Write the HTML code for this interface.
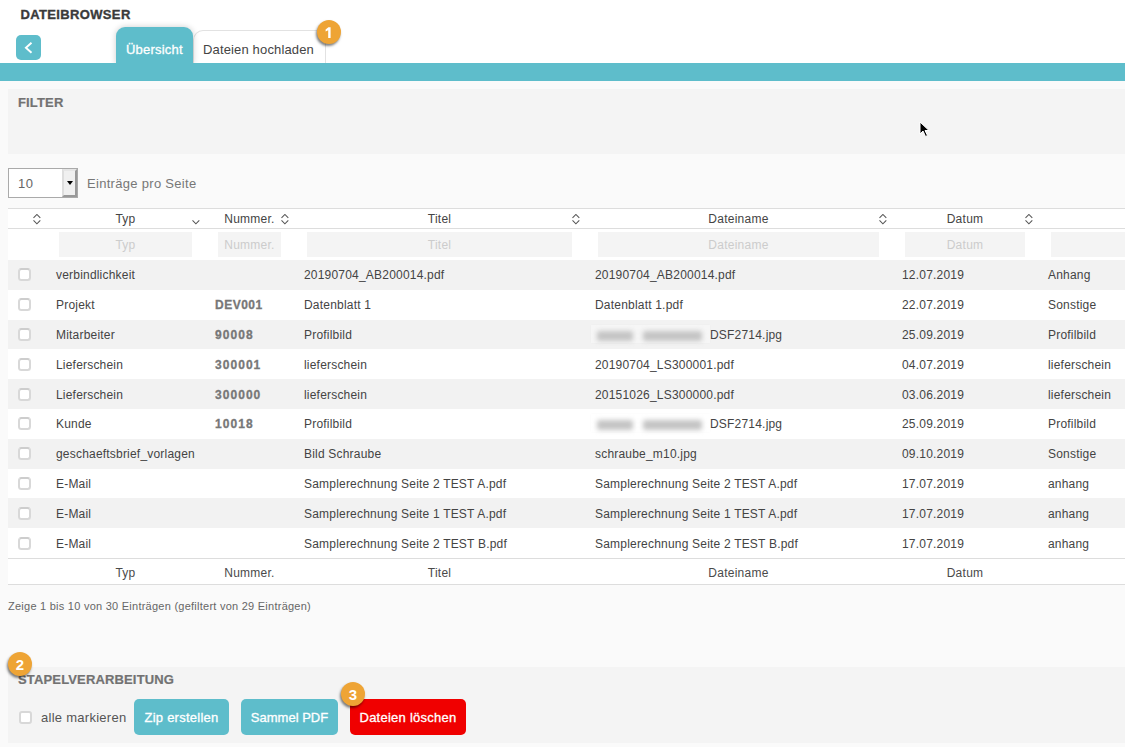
<!DOCTYPE html>
<html><head><meta charset="utf-8">
<style>
*{box-sizing:border-box;margin:0;padding:0}
html,body{width:1125px;height:747px;overflow:hidden}
body{background:#fafafa;font-family:"Liberation Sans",sans-serif;color:#444;position:relative}
.a{position:absolute;white-space:nowrap}
#top{position:absolute;left:0;top:0;width:1125px;height:63px;background:#fff}
#band{position:absolute;left:0;top:63px;width:1125px;height:18px;background:#5ebdcb}
#title{left:20.5px;top:7px;font-size:13px;font-weight:bold;color:#3a3a3a;letter-spacing:0.35px;-webkit-text-stroke:0.35px #3a3a3a}
#back{left:16px;top:35px;width:25px;height:25px;border-radius:5px;background:#5ebdcb}
#tab1{left:116px;top:27px;width:77px;height:37px;background:#5ebdcb;border-radius:9px 9px 0 0;box-shadow:0 0 6px rgba(0,0,0,.2)}
#tab1 span{position:absolute;left:10px;top:15px;color:#fff;font-size:13px;letter-spacing:0.2px;-webkit-text-stroke:0.3px #fff}
#tab2{left:193px;top:30px;width:133px;height:34px;background:#fff;border:1px solid #e2e2e2;border-bottom:none;border-radius:10px 10px 0 0}
#tab2 span{position:absolute;left:9px;top:11px;color:#444;font-size:13px;letter-spacing:0.15px}
.badge{position:absolute;width:24px;height:24px;border-radius:50%;background:#eea435;color:#fff;font-weight:bold;font-size:15px;text-align:center;line-height:25px;box-shadow:-1px 2px 2.5px rgba(0,0,0,.5)}
#filter{left:8px;top:89px;width:1117px;height:65px;background:#f4f4f4}
#filter b,#stapel b{position:absolute;left:10px;top:6px;font-size:13px;color:#727272;letter-spacing:.15px;-webkit-text-stroke:0.2px #727272}
#sel{left:8px;top:168px;width:70px;height:30px;background:#fff;border:1px solid #aaa}
#sel span{position:absolute;left:9px;top:7px;font-size:13px;color:#666;letter-spacing:.6px}
#selbtn{position:absolute;left:53px;top:0;width:15px;height:28px;background:#f0f0f0;border-left:2px solid #dedede;border-top:2px solid #e6e6e6;border-right:2px solid #999;border-bottom:2px solid #999}
#selbtn:after{content:"";position:absolute;left:2.5px;top:10px;border-left:3px solid transparent;border-right:3px solid transparent;border-top:4px solid #000}
#epp{left:87px;top:176px;font-size:13px;color:#777;letter-spacing:0.3px}
#thead{left:8px;top:208px;width:1117px;height:21px;background:#fff;border-top:1px solid #ddd;border-bottom:1px solid #ddd}
#frow{left:8px;top:229px;width:1117px;height:31px;background:#fff}
.inp{top:232px;height:25px;background:#f4f4f4;color:#ccc;font-size:12px;text-align:center;line-height:27px;letter-spacing:.25px}
.th{top:212px;font-size:12px;color:#444;letter-spacing:.25px;text-align:center}
.tf{top:566px;font-size:12px;color:#4a4a4a;letter-spacing:.25px;text-align:center}
.row{width:1117px;left:8px;background:#fff}
.row.o{background:#f2f2f2}
.cb{left:18px;width:13px;height:13px;border:2px solid #d8d8d8;border-top-color:#cdcdcd;border-radius:3.5px;background:#fff}
.td{font-size:12px;line-height:14px;color:#444;letter-spacing:.2px}
.td.b{font-weight:bold;color:#777;letter-spacing:.5px;-webkit-text-stroke:0.3px #777}
.blurbox{width:119px;height:18px;background:rgba(255,255,255,.3);box-shadow:0 0 2px rgba(0,0,0,.03)}
.td.blur{filter:blur(2.2px);color:#666;letter-spacing:.3px;font-weight:bold}
#tfoot{left:8px;top:558px;width:1117px;height:27px;background:#fff;border-top:1px solid #ddd;border-bottom:1px solid #ddd}
#info{left:8px;top:600px;font-size:11px;color:#666;letter-spacing:.25px}
#stapel{left:8px;top:667px;width:1117px;height:76px;background:#f4f4f4}
#cball{left:19px;top:711px;width:13px;height:13px;border:2px solid #d8d8d8;border-radius:3px;background:#fff}
#alle{left:41px;top:710px;font-size:13px;color:#555;letter-spacing:.27px}
.btn{position:absolute;top:699px;height:36px;border-radius:5px;background:#5ebdcb;color:#fff;font-size:13px;text-align:center;line-height:37px;letter-spacing:.25px;-webkit-text-stroke:0.3px #fff}
#cur{left:919px;top:121px}

#stapel b{top:5px}
.blob{height:10px;background:#c4c4c4;border-radius:2px;filter:blur(2.5px)}

</style></head><body>
<div id="top"></div>
<div class="a" id="title">DATEIBROWSER</div>
<div class="a" id="back"><svg width="25" height="25" style="position:absolute;left:0;top:0"><path d="M15.5 7.7 L9.9 12.7 L15.5 17.8" fill="none" stroke="#fff" stroke-width="1.9"/></svg></div>
<div class="a" id="tab2"><span>Dateien hochladen</span></div>
<div class="a" id="tab1"><span>Übersicht</span></div>
<div id="band"></div>
<div class="badge" style="left:316.5px;top:20px"><svg width="24" height="24" style="position:absolute;left:0;top:0"><path d="M8.6 9.6 L11.4 7.2 L13.6 7.2 L13.6 18 L11.2 18 L11.2 10.2 L8.6 11.6 Z" fill="#fff"/></svg></div>
<div class="a" id="filter"><b>FILTER</b></div>
<div class="a" id="sel"><span>10</span><div id="selbtn"></div></div>
<div class="a" id="epp">Einträge pro Seite</div>
<div class="a" id="thead"></div>
<svg class="a" style="left:33px;top:214px" width="9" height="11"><path d="M0.5 3.9 L3.9 0.5 L7.3 3.9 M0.5 6.4 L3.9 9.8 L7.3 6.4" fill="none" stroke="#555" stroke-width="1.05"/></svg><div class="a th" style="left:46px;width:159px">Typ</div>
<svg class="a" style="left:192px;top:214px" width="9" height="11"><path d="M0.5 6.4 L3.9 9.8 L7.3 6.4" fill="none" stroke="#555" stroke-width="1.05"/></svg><div class="a th" style="left:205px;width:89px">Nummer.</div>
<svg class="a" style="left:281px;top:214px" width="9" height="11"><path d="M0.5 3.9 L3.9 0.5 L7.3 3.9 M0.5 6.4 L3.9 9.8 L7.3 6.4" fill="none" stroke="#555" stroke-width="1.05"/></svg><div class="a th" style="left:294px;width:291px">Titel</div>
<svg class="a" style="left:572px;top:214px" width="9" height="11"><path d="M0.5 3.9 L3.9 0.5 L7.3 3.9 M0.5 6.4 L3.9 9.8 L7.3 6.4" fill="none" stroke="#555" stroke-width="1.05"/></svg><div class="a th" style="left:585px;width:307px">Dateiname</div>
<svg class="a" style="left:879px;top:214px" width="9" height="11"><path d="M0.5 3.9 L3.9 0.5 L7.3 3.9 M0.5 6.4 L3.9 9.8 L7.3 6.4" fill="none" stroke="#555" stroke-width="1.05"/></svg><div class="a th" style="left:892px;width:146px">Datum</div>
<svg class="a" style="left:1025px;top:214px" width="9" height="11"><path d="M0.5 3.9 L3.9 0.5 L7.3 3.9 M0.5 6.4 L3.9 9.8 L7.3 6.4" fill="none" stroke="#555" stroke-width="1.05"/></svg><div class="a" id="frow"></div>
<div class="a inp" style="left:59px;width:133px">Typ</div>
<div class="a inp" style="left:218px;width:63px">Nummer.</div>
<div class="a inp" style="left:307px;width:265px">Titel</div>
<div class="a inp" style="left:598px;width:281px">Dateiname</div>
<div class="a inp" style="left:905px;width:120px">Datum</div>
<div class="a inp" style="left:1051px;width:200px"></div>
<div class="a row o" style="top:260.0px;height:29.8px"></div>
<div class="a cb" style="top:268px"></div>
<div class="a td" style="left:56px;top:268px">verbindlichkeit</div>
<div class="a td" style="left:304px;top:268px">20190704_AB200014.pdf</div>
<div class="a td" style="left:595px;top:268px">20190704_AB200014.pdf</div>
<div class="a td" style="left:902px;top:268px">12.07.2019</div>
<div class="a td" style="left:1048px;top:268px">Anhang</div>
<div class="a row" style="top:289.8px;height:29.8px"></div>
<div class="a cb" style="top:298px"></div>
<div class="a td" style="left:56px;top:298px">Projekt</div>
<div class="a td b" style="left:215px;top:298px">DEV001</div>
<div class="a td" style="left:304px;top:298px">Datenblatt 1</div>
<div class="a td" style="left:595px;top:298px">Datenblatt 1.pdf</div>
<div class="a td" style="left:902px;top:298px">22.07.2019</div>
<div class="a td" style="left:1048px;top:298px">Sonstige</div>
<div class="a row o" style="top:319.6px;height:29.8px"></div>
<div class="a cb" style="top:328px"></div>
<div class="a td" style="left:56px;top:328px">Mitarbeiter</div>
<div class="a td b" style="left:215px;top:328px;letter-spacing:1.05px">90008</div>
<div class="a td" style="left:304px;top:328px">Profilbild</div>
<div class="a blurbox" style="left:591px;top:325px"></div><div class="a blob" style="left:597px;top:331px;width:36px"></div><div class="a blob" style="left:643px;top:331px;width:59px"></div><div class="a td" style="left:710px;top:328px">DSF2714.jpg</div>
<div class="a td" style="left:902px;top:328px">25.09.2019</div>
<div class="a td" style="left:1048px;top:328px">Profilbild</div>
<div class="a row" style="top:349.4px;height:29.8px"></div>
<div class="a cb" style="top:358px"></div>
<div class="a td" style="left:56px;top:358px">Lieferschein</div>
<div class="a td b" style="left:215px;top:358px;letter-spacing:1.05px">300001</div>
<div class="a td" style="left:304px;top:358px">lieferschein</div>
<div class="a td" style="left:595px;top:358px">20190704_LS300001.pdf</div>
<div class="a td" style="left:902px;top:358px">04.07.2019</div>
<div class="a td" style="left:1048px;top:358px">lieferschein</div>
<div class="a row o" style="top:379.2px;height:29.8px"></div>
<div class="a cb" style="top:388px"></div>
<div class="a td" style="left:56px;top:388px">Lieferschein</div>
<div class="a td b" style="left:215px;top:388px;letter-spacing:1.05px">300000</div>
<div class="a td" style="left:304px;top:388px">lieferschein</div>
<div class="a td" style="left:595px;top:388px">20151026_LS300000.pdf</div>
<div class="a td" style="left:902px;top:388px">03.06.2019</div>
<div class="a td" style="left:1048px;top:388px">lieferschein</div>
<div class="a row" style="top:409.0px;height:29.8px"></div>
<div class="a cb" style="top:417px"></div>
<div class="a td" style="left:56px;top:417px">Kunde</div>
<div class="a td b" style="left:215px;top:417px;letter-spacing:1.05px">10018</div>
<div class="a td" style="left:304px;top:417px">Profilbild</div>
<div class="a blurbox" style="left:591px;top:414px"></div><div class="a blob" style="left:597px;top:420px;width:36px"></div><div class="a blob" style="left:643px;top:420px;width:59px"></div><div class="a td" style="left:710px;top:417px">DSF2714.jpg</div>
<div class="a td" style="left:902px;top:417px">25.09.2019</div>
<div class="a td" style="left:1048px;top:417px">Profilbild</div>
<div class="a row o" style="top:438.8px;height:29.8px"></div>
<div class="a cb" style="top:447px"></div>
<div class="a td" style="left:56px;top:447px">geschaeftsbrief_vorlagen</div>
<div class="a td" style="left:304px;top:447px">Bild Schraube</div>
<div class="a td" style="left:595px;top:447px">schraube_m10.jpg</div>
<div class="a td" style="left:902px;top:447px">09.10.2019</div>
<div class="a td" style="left:1048px;top:447px">Sonstige</div>
<div class="a row" style="top:468.6px;height:29.8px"></div>
<div class="a cb" style="top:477px"></div>
<div class="a td" style="left:56px;top:477px">E-Mail</div>
<div class="a td" style="left:304px;top:477px">Samplerechnung Seite 2 TEST A.pdf</div>
<div class="a td" style="left:595px;top:477px">Samplerechnung Seite 2 TEST A.pdf</div>
<div class="a td" style="left:902px;top:477px">17.07.2019</div>
<div class="a td" style="left:1048px;top:477px">anhang</div>
<div class="a row o" style="top:498.4px;height:29.8px"></div>
<div class="a cb" style="top:507px"></div>
<div class="a td" style="left:56px;top:507px">E-Mail</div>
<div class="a td" style="left:304px;top:507px">Samplerechnung Seite 1 TEST A.pdf</div>
<div class="a td" style="left:595px;top:507px">Samplerechnung Seite 1 TEST A.pdf</div>
<div class="a td" style="left:902px;top:507px">17.07.2019</div>
<div class="a td" style="left:1048px;top:507px">anhang</div>
<div class="a row" style="top:528.2px;height:29.8px"></div>
<div class="a cb" style="top:537px"></div>
<div class="a td" style="left:56px;top:537px">E-Mail</div>
<div class="a td" style="left:304px;top:537px">Samplerechnung Seite 2 TEST B.pdf</div>
<div class="a td" style="left:595px;top:537px">Samplerechnung Seite 2 TEST B.pdf</div>
<div class="a td" style="left:902px;top:537px">17.07.2019</div>
<div class="a td" style="left:1048px;top:537px">anhang</div>
<div class="a" id="tfoot"></div>
<div class="a tf" style="left:46px;width:159px">Typ</div>
<div class="a tf" style="left:205px;width:89px">Nummer.</div>
<div class="a tf" style="left:294px;width:291px">Titel</div>
<div class="a tf" style="left:585px;width:307px">Dateiname</div>
<div class="a tf" style="left:892px;width:146px">Datum</div>
<div class="a" id="info">Zeige 1 bis 10 von 30 Einträgen (gefiltert von 29 Einträgen)</div>
<div class="a" id="stapel"><b>STAPELVERARBEITUNG</b></div>
<div class="a" id="cball"></div>
<div class="a" id="alle">alle markieren</div>
<div class="badge" style="left:8px;top:652px">2</div>
<div class="btn" style="left:134px;width:95px">Zip erstellen</div>
<div class="btn" style="left:241px;width:97px;letter-spacing:0">Sammel PDF</div>
<div class="btn" style="left:350px;width:116px;background:#f00000">Dateien löschen</div>
<div class="badge" style="left:341px;top:682px">3</div>
<svg class="a" id="cur" width="12" height="18" viewBox="0 0 12 18"><path d="M1 1 L1 13 L4 10 L6.5 15.5 L8.5 14.5 L6 9.5 L10 9.5 Z" fill="#000" stroke="#fff" stroke-width="1"/></svg>
</body></html>
